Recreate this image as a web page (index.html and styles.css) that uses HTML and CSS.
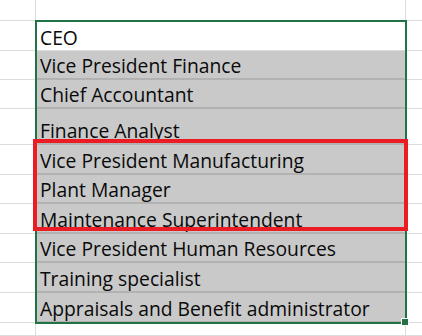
FILE: index.html
```html
<!DOCTYPE html>
<html lang="en">
<head>
    <meta charset="UTF-8">
    <title>Org roles</title>
    <link rel="stylesheet" href="styles.css">
</head>
<body>
    <div class="sheet">
        <div class="cell gutter"></div><div class="cell main top"></div><div class="cell rest"></div>

        <div class="cell gutter"></div><div class="cell main">CEO</div><div class="cell rest"></div>
        <div class="cell gutter"></div><div class="cell main fill">Vice President Finance</div><div class="cell rest"></div>
        <div class="cell gutter"></div><div class="cell main fill">Chief Accountant</div><div class="cell rest"></div>
        <div class="cell gutter"></div><div class="cell main fill">Finance Analyst</div><div class="cell rest"></div>
        <div class="cell gutter"></div><div class="cell main fill">Vice President Manufacturing</div><div class="cell rest"></div>
        <div class="cell gutter"></div><div class="cell main fill">Plant Manager</div><div class="cell rest"></div>
        <div class="cell gutter"></div><div class="cell main fill">Maintenance Superintendent</div><div class="cell rest"></div>
        <div class="cell gutter"></div><div class="cell main fill">Vice President Human Resources</div><div class="cell rest"></div>
        <div class="cell gutter"></div><div class="cell main fill">Training specialist</div><div class="cell rest"></div>
        <div class="cell gutter"></div><div class="cell main fill">Appraisals and Benefit administrator</div><div class="cell rest"></div>

        <div class="cell gutter"></div><div class="cell main"></div><div class="cell rest"></div>

        <!-- active range outline with its fill handle -->
        <div class="selection"><span class="handle"></span></div>
        <!-- highlight round the manufacturing group -->
        <div class="callout"></div>
    </div>
</body>
</html>
```

FILE: styles.css
```css
body {
    margin: 0;
    background: #fff;
    font-family: "Open Sans", Lato, sans-serif;
    overflow: hidden;
}

.sheet {
    position: relative;
    display: grid;
    grid-template-columns: 36px 370px 1fr;
    grid-template-rows: 21px 30px 29px 29px 36px 30px 29px 30px 29px 30px 30px 1fr;
    height: 336px;
}

.cell {
    border-bottom: 1px solid #dcdcdc;
    box-sizing: border-box;
}

.gutter {
    border-right: 1px solid #dcdcdc;
}

.main {
    display: flex;
    align-items: flex-end;
    padding: 0 0 1px 4px;
    font-size: 19.3px;
    line-height: 22px;
    color: #0a0a0a;
    border-right: 1px solid #dcdcdc;
    white-space: nowrap;
}

.main.top {
    border-bottom: none;
}

.main.fill {
    background: #c9c9c9;
    border-bottom: 2px solid #b2b2b2;
}

.selection {
    position: absolute;
    left: 35px;
    top: 20px;
    width: 372px;
    height: 304px;
    box-sizing: border-box;
    border: 2px solid #217346;
}

.handle {
    position: absolute;
    right: -4px;
    bottom: -4px;
    width: 6px;
    height: 6px;
    background: #217346;
    border: 1px solid #fff;
}

.callout {
    position: absolute;
    left: 33px;
    top: 139px;
    width: 375px;
    height: 92px;
    box-sizing: border-box;
    border: 4px solid #ec1c24;
}
```
